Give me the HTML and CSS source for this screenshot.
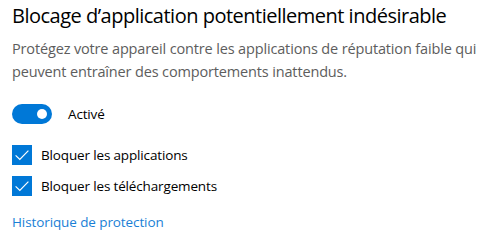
FILE: index.html
```html
<!DOCTYPE html>
<html lang="fr">
<head>
<meta charset="utf-8">
<link rel="stylesheet" href="styles.css">
</head>
<body>
<div class="panel">
  <h1 class="title">Blocage d’application potentiellement indésirable</h1>
  <p class="desc">Protégez votre appareil contre les applications de réputation faible qui peuvent entraîner des comportements inattendus.</p>
  <div class="toggle-row">
    <span class="toggle"><span class="knob"></span></span>
    <span class="label">Activé</span>
  </div>
  <div class="checks">
    <label class="check-row">
      <span class="box"><svg width="20" height="20" viewBox="0 0 20 20"><path d="M3.6 10.4 L7.8 14.4 L16.4 5.6" fill="none" stroke="#fff" stroke-width="1.2"/></svg></span>
      <span class="label">Bloquer les applications</span>
    </label>
    <label class="check-row">
      <span class="box"><svg width="20" height="20" viewBox="0 0 20 20"><path d="M3.6 10.4 L7.8 14.4 L16.4 5.6" fill="none" stroke="#fff" stroke-width="1.2"/></svg></span>
      <span class="label">Bloquer les téléchargements</span>
    </label>
  </div>
  <a class="link" href="#">Historique de protection</a>
</div>
</body>
</html>
```
FILE: styles.css
```css
html, body {
  margin: 0;
  padding: 0;
  background: #ffffff;
}
body {
  font-family: "Open Sans", "Noto Sans", sans-serif;
  width: 496px;
  height: 240px;
  overflow: hidden;
}
.panel {
  padding: 1px 12px 0 12px;
  display: flex;
  flex-direction: column;
  align-items: flex-start;
}
.title {
  margin: 0;
  font-size: 20px;
  font-weight: 400;
  line-height: 29px;
  color: #000;
  letter-spacing: -0.5px;
  white-space: nowrap;
}
.desc {
  margin: 7px 0 0 0;
  font-size: 14.5px;
  line-height: 23px;
  color: #5d5d5d;
  width: 472px;
  letter-spacing: -0.15px;
}
.toggle-row {
  margin-top: 21px;
  display: flex;
  align-items: center;
  gap: 16px;
  height: 20px;
}
.toggle {
  width: 40px;
  height: 20px;
  border-radius: 10px;
  background: #0078d7;
  display: flex;
  align-items: center;
  justify-content: flex-end;
  padding-right: 5px;
  box-sizing: border-box;
}
.knob {
  width: 10px;
  height: 10px;
  border-radius: 50%;
  background: #fff;
}
.label {
  font-size: 13.5px;
  letter-spacing: -0.15px;
  color: #000;
}
.checks {
  margin-top: 21px;
  display: flex;
  flex-direction: column;
  gap: 11px;
}
.check-row {
  display: flex;
  align-items: center;
  gap: 9px;
  height: 20px;
}
.box {
  width: 20px;
  height: 20px;
  background: #0078d7;
  display: block;
}
.box svg { display: block; }
.link {
  margin-top: 17px;
  font-size: 13.5px;
  letter-spacing: -0.1px;
  color: #1a7fd6;
  text-decoration: none;
}
```
